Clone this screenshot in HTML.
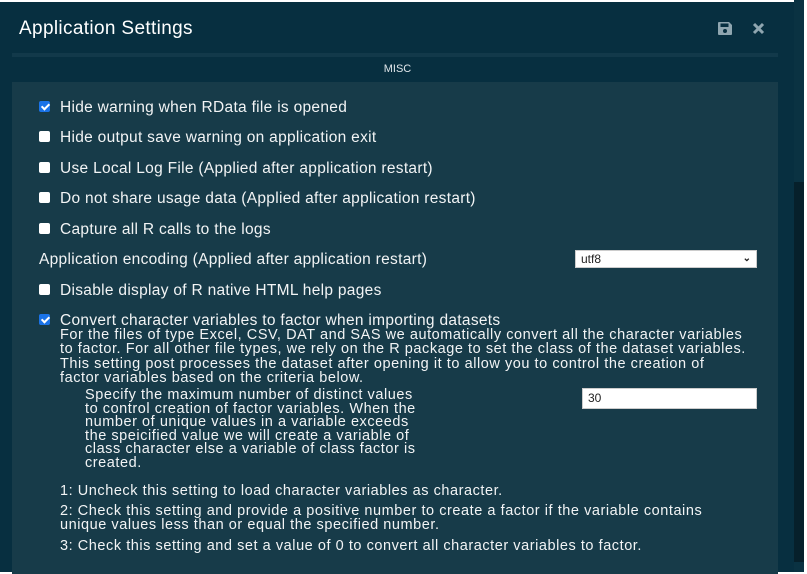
<!DOCTYPE html>
<html><head><style>
body{margin:0;width:807px;height:572px;overflow:hidden;background:#fff;font-family:"Liberation Sans",sans-serif;color:#fff}
.win{position:absolute;left:0;top:2px;width:804px;height:570px;background:#072f40}
.title{position:absolute;left:19px;top:16px;font-size:19px;color:#fff;letter-spacing:0.35px}
.div{position:absolute;left:12px;top:51px;width:766px;height:4px;background:#12394a}
.misc{position:absolute;left:0;width:795px;top:61px;text-align:center;font-size:11px;color:#e0e6ea}
.panel{position:absolute;left:12px;top:80px;width:766px;height:492px;background:#173b49}
.sb{position:absolute;left:794px;top:0;width:10px;height:572px;background:#0a3242}
.thumb{position:absolute;left:794px;top:182px;width:10px;height:380px;background:#06202b}
.t{position:absolute;font-size:15.5px;white-space:nowrap;letter-spacing:0.3px;color:#f2f4f5}
.cb{position:absolute;left:39px;width:11px;height:11px;background:#fff;border-radius:2px}
.cb.on{background:#1a73e8}
.cb.on:after{content:"";position:absolute;left:3.5px;top:1px;width:3px;height:6px;border:solid #fff;border-width:0 2px 2px 0;transform:rotate(45deg)}
.p{position:absolute;font-size:14.5px;line-height:14.4px;color:#f2f4f5;letter-spacing:0.55px;white-space:nowrap}
.inp{position:absolute;background:#fff;color:#222;font-size:12px;box-sizing:border-box;padding-left:5px;border:1px solid #ccc}
</style></head><body>
<div class="win">
<div class="title">Application Settings</div>
<svg style="position:absolute;left:717px;top:19px" width="16" height="15" viewBox="0 0 16 15"><path d="M1 2a1 1 0 0 1 1-1h10l3 3v9a1 1 0 0 1-1 1H2a1 1 0 0 1-1-1z" fill="#8fa6b0"/><rect x="3.5" y="2.5" width="8" height="3.5" fill="#072f40"/><circle cx="8" cy="10" r="2" fill="#072f40"/></svg>
<svg style="position:absolute;left:752px;top:20px" width="13" height="13" viewBox="0 0 13 13"><path d="M2 2L11 11M11 2L2 11" stroke="#8fa6b0" stroke-width="3"/></svg>
<div class="div"></div>
<div class="misc">MISC</div>
<div class="panel"></div>
</div>
<div class="sb"></div><div class="thumb"></div>

<div class="cb on" style="top:101px"></div><div class="t" style="left:60px;top:99px">Hide warning when RData file is opened</div>
<div class="cb" style="top:131px"></div><div class="t" style="left:60px;top:129px">Hide output save warning on application exit</div>
<div class="cb" style="top:162px"></div><div class="t" style="left:60px;top:160px">Use Local Log File (Applied after application restart)</div>
<div class="cb" style="top:192px"></div><div class="t" style="left:60px;top:190px">Do not share usage data (Applied after application restart)</div>
<div class="cb" style="top:223px"></div><div class="t" style="left:60px;top:221px">Capture all R calls to the logs</div>
<div class="t" style="left:39px;top:251px">Application encoding (Applied after application restart)</div>
<div class="inp" style="left:575px;top:250px;width:182px;height:18px;line-height:16px">utf8<span style="position:absolute;right:5px;top:0;font-size:10px;font-weight:bold">&#8964;</span></div>
<div class="cb" style="top:284px"></div><div class="t" style="left:60px;top:282px">Disable display of R native HTML help pages</div>
<div class="cb on" style="top:314px"></div><div class="t" style="left:60px;top:312px">Convert character variables to factor when importing datasets</div>
<div class="p" style="left:60px;top:328px">For the files of type Excel, CSV, DAT and SAS we automatically convert all the character variables<br>to factor. For all other file types, we rely on the R package to set the class of the dataset variables.<br>This setting post processes the dataset after opening it to allow you to control the creation of<br>factor variables based on the criteria below.</div>
<div class="p" style="left:85px;top:389px;line-height:13.5px">Specify the maximum number of distinct values<br>to control creation of factor variables. When the<br>number of unique values in a variable exceeds<br>the speicified value we will create a variable of<br>class character else a variable of class factor is<br>created.</div>
<div class="inp" style="left:582px;top:388px;width:175px;height:21px;line-height:19px">30</div>
<div class="p" style="left:60px;top:484px">1: Uncheck this setting to load character variables as character.</div>
<div class="p" style="left:60px;top:504px">2: Check this setting and provide a positive number to create a factor if the variable contains<br>unique values less than or equal the specified number.</div>
<div class="p" style="left:60px;top:539px">3: Check this setting and set a value of 0 to convert all character variables to factor.</div>
</body></html>
